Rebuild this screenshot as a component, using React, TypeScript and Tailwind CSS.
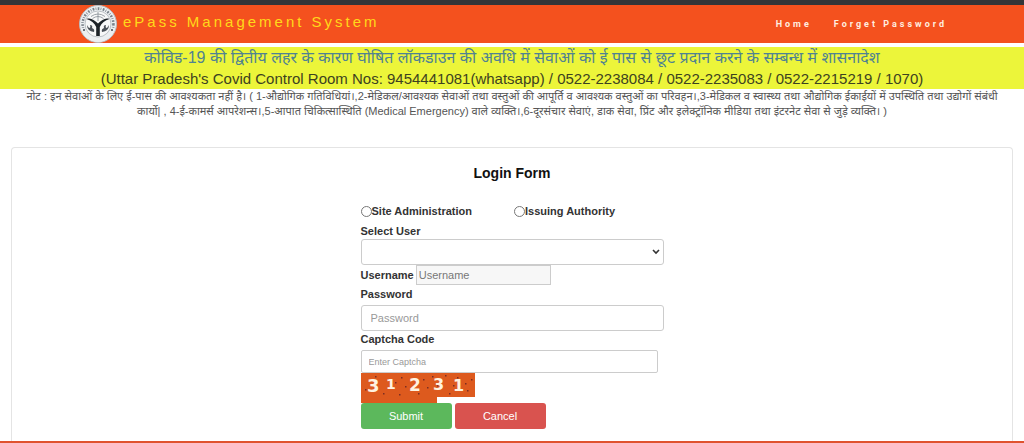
import { useState } from "react";

const NAV_LINKS = [
  { label: "Home", href: "#home" },
  { label: "Forget Password", href: "#forget-password" },
];

const ROLES = [
  { label: "Site Administration", value: "site" },
  { label: "Issuing Authority", value: "issuing" },
];

const SPECKS = [
  [4, 16], [14, 3], [22, 20], [27, 6], [38, 21], [40, 4], [44, 13], [62, 6],
  [66, 14], [71, 3], [76, 12], [84, 2], [88, 20], [92, 12], [96, 4], [104, 10],
  [106, 17], [110, 6], [57, 20], [34, 9],
];

const CAPTCHA = [
  { char: "3", x: 6, y: 19, size: 18 },
  { char: "1", x: 25, y: 16, size: 14 },
  { char: "2", x: 48, y: 18, size: 17 },
  { char: "3", x: 72, y: 17, size: 16 },
  { char: "1", x: 92, y: 18, size: 16 },
];

function Emblem() {
  return (
    <svg viewBox="0 0 38 38" className="h-[38px] w-[38px] shrink-0" aria-hidden="true">
      <circle cx="19" cy="19" r="18.5" fill="#eceff1" stroke="#b8bcc0" />
      <circle cx="19" cy="19" r="15.4" fill="none" stroke="#7a828a" strokeWidth="2.6" strokeDasharray="1.6 1.2 .7 1.3" pathLength="90" />
      <path d="M4 23 A15.5 15.5 0 0 0 34 23" fill="none" stroke="#eceff1" strokeWidth="4.5" />
      <circle cx="19" cy="19" r="13" fill="#f7f8f8" stroke="#a3aab0" strokeWidth=".7" />
      <path d="M7.5 14 C12 12.5 15 15 19 18.5 C23 15 26 12.5 30.5 14 C26 15.5 22.5 18 20.8 22 V31 H17.2 V22 C15.5 18 12 15.5 7.5 14Z" fill="#1c2227" />
      <path d="M12 11.5 Q19 6.5 26 11.5 M13.5 13.5 Q19 9.5 24.5 13.5 M19 7 V16" fill="none" stroke="#848b92" strokeWidth=".8" />
      <path d="M8 20 Q8 26 15 27 Q16 24 13 23 Q14 20 11 20 Q12 23 10 23Z M30 20 Q30 26 23 27 Q22 24 25 23 Q24 20 27 20 Q26 23 28 23Z" fill="#4a5057" />
      <circle cx="5" cy="25" r="1" fill="#3f464c" />
      <circle cx="33" cy="25" r="1" fill="#3f464c" />
    </svg>
  );
}

function CaptchaImage() {
  return (
    <svg viewBox="0 0 114 30" className="block h-[30px] w-[114px]" role="img" aria-label="Captcha">
      <path d="M0 0H114V24H76V30H0Z" fill="#dd5a1e" />
      {SPECKS.map(([x, y]) => (
        <rect key={`${x}-${y}`} x={x} y={y} width="1.5" height="1.5" fill="#7b2d22" />
      ))}
      {CAPTCHA.map((c) => (
        <text key={c.x} x={c.x} y={c.y} fontSize={c.size} fontWeight="700" fontFamily="DejaVu Sans, sans-serif" fill="#fff3e0">
          {c.char}
        </text>
      ))}
    </svg>
  );
}

export default function App() {
  const [role, setRole] = useState("");
  const [form, setForm] = useState({ username: "", password: "", captcha: "" });

  const handleChange = (e: React.ChangeEvent<HTMLInputElement>) => {
    setForm({ ...form, [e.target.name]: e.target.value });
  };

  return (
    <div className="bg-white font-['Liberation_Sans','Noto_Sans',sans-serif] text-[#333]">
      <header className="border-t-[5px] border-[#333538] bg-[#f4511e]">
        <div className="flex h-[38px] items-center justify-between pr-[77px] pl-[79px]">
          <div className="flex items-center gap-[6px]">
            <Emblem />
            <span className="pb-1 text-[15px] leading-5 tracking-[3px] text-[#ffd91a]">ePass Management System</span>
          </div>
          <nav className="flex gap-[22px] font-[Roboto,sans-serif] text-[9px] leading-4 font-bold tracking-[3px] text-[#ffeee0]">
            {NAV_LINKS.map((link) => (
              <a key={link.label} href={link.href}>
                {link.label}
              </a>
            ))}
          </nav>
        </div>
      </header>

      <div className="mt-1 bg-[#ecf53a] text-center">
        <a href="#order" className="block h-[21px] text-base leading-[21px] text-[#4f8292]">
          कोविड-19 की द्वितीय लहर के कारण घोषित लॉकडाउन की अवधि में सेवाओं को ई पास से छूट प्रदान करने के सम्बन्ध में शासनादेश
        </a>
        <p className="h-[21px] text-[15px] leading-[21px] text-[#3d4220]">
          (Uttar Pradesh&apos;s Covid Control Room Nos: 9454441081(whatsapp) / 0522-2238084 / 0522-2235083 / 0522-2215219 / 1070)
        </p>
      </div>

      <p className="text-center text-[11px] leading-[15px] text-[#555]">
        नोट : इन सेवाओं के लिए ई-पास की आवश्यकता नहीं है। ( 1-औद्योगिक गतिविधियां।,2-मेडिकल/आवश्यक सेवाओं तथा वस्तुओं की आपूर्ति व आवश्यक वस्तुओं का परिवहन।,3-मेडिकल व स्वास्थ्य तथा औद्योगिक ईकाईयों में उपस्थिति तथा उद्योगों संबंधी
        <br />
        कार्यो| , 4-ई-कामर्स आपरेशन्स।,5-आपात चिकित्सास्थिति (Medical Emergency) वाले व्यक्ति।,6-दूरसंचार सेवाएं, डाक सेवा, प्रिंट और इलेक्ट्रॉनिक मीडिया तथा इंटरनेट सेवा से जुड़े व्यक्ति। )
      </p>

      <main className="mx-[11px] mt-7 rounded-t border border-b-0 border-[#e4e4e4] pb-3">
        <h1 className="pt-[15px] text-center text-sm leading-5 font-bold text-[#111]">Login Form</h1>

        <form
          className="mx-auto mt-5 w-[303px] text-[11px] leading-4"
          onSubmit={(e) => e.preventDefault()}
        >
          <div className="grid grid-cols-2 gap-1 font-bold">
            {ROLES.map((r) => (
              <label key={r.value} className="flex items-center whitespace-nowrap">
                <input
                  type="radio"
                  name="role"
                  value={r.value}
                  checked={role === r.value}
                  onChange={() => setRole(r.value)}
                  className="h-[11px] w-[11px] appearance-none rounded-full border border-[#777] bg-white checked:border-4 checked:border-blue-600"
                />
                {r.label}
              </label>
            ))}
          </div>

          <label htmlFor="user" className="mt-1 block font-bold">
            Select User
          </label>
          <div className="grid items-center">
            <select
              id="user"
              className="col-start-1 row-start-1 h-[26px] w-full appearance-none rounded-[3px] border border-[#ccc] bg-white px-2"
            >
              <option value=""></option>
            </select>
            <svg viewBox="0 0 8 6" className="pointer-events-none col-start-1 row-start-1 mr-1 h-[6px] w-2 justify-self-end" aria-hidden="true">
              <path d="M1 1L4 4L7 1" fill="none" stroke="#333" strokeWidth="1.6" />
            </svg>
          </div>

          <div className="flex items-center gap-[2px]">
            <label htmlFor="username" className="font-bold">
              Username
            </label>
            <input
              id="username"
              name="username"
              value={form.username}
              onChange={handleChange}
              placeholder="Username"
              className="h-5 w-[135px] border border-[#ccc] bg-[#f7f7f7] px-0.5 placeholder:text-[#777]"
            />
          </div>

          <label htmlFor="password" className="block pt-px font-bold">
            Password
          </label>
          <input
            id="password"
            name="password"
            type="password"
            value={form.password}
            onChange={handleChange}
            placeholder="Password"
            className="mt-[3px] block h-[26px] w-full rounded-[3px] border border-[#ccc] px-[9px] placeholder:text-[#999]"
          />

          <label htmlFor="captcha" className="block font-bold">
            Captcha Code
          </label>
          <input
            id="captcha"
            name="captcha"
            value={form.captcha}
            onChange={handleChange}
            placeholder="Enter Captcha"
            className="mt-[3px] block h-[23px] w-[297px] rounded-xs border border-[#ccc] px-[7px] text-[9px] placeholder:text-[#999]"
          />

          <CaptchaImage />

          <div className="flex gap-[3px] text-white">
            <button type="submit" className="h-[26px] w-[91px] rounded-[3px] bg-[#5cb85c]">
              Submit
            </button>
            <button type="reset" className="h-[26px] w-[91px] rounded-[3px] bg-[#d9534f]">
              Cancel
            </button>
          </div>
        </form>
      </main>
      <footer className="h-[2px] bg-[#e0532f]" />
    </div>
  );
}
